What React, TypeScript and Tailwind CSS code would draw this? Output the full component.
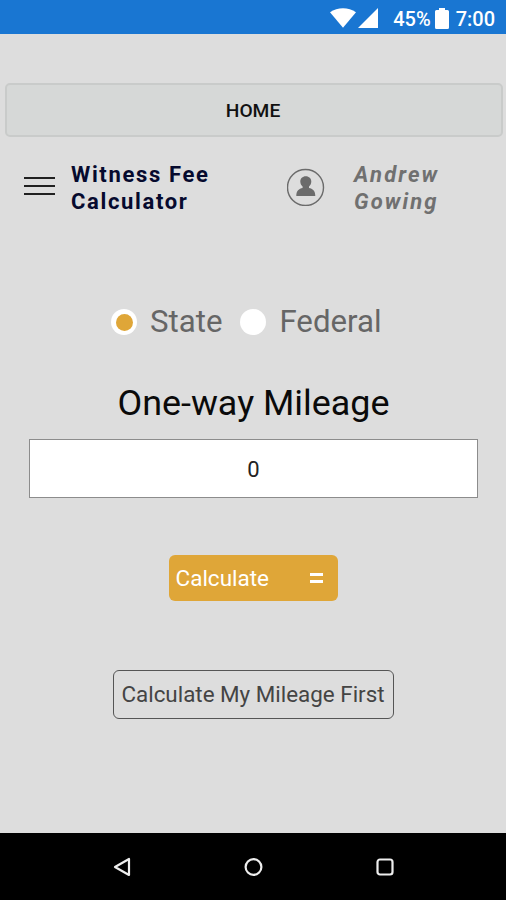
import React, { useState } from 'react';

type Court = 'State' | 'Federal';

const StatusBar: React.FC = () => (
    <div className="h-[34px] shrink-0 bg-[#1976d2] flex items-center justify-end pr-[11px] pt-[2px] text-white">
        <svg width="26" height="20" viewBox="0 0 26 20" fill="currentColor">
            <path d="M0 4.2C7.500-1.100 18.500-1.100 26 4.200L13 19.800Z" />
        </svg>
        <svg className="ml-[2px]" width="20" height="20" viewBox="0 0 20 20" fill="currentColor">
            <path d="M20 0V20H0Z" />
        </svg>
        <span className="ml-[15px] pt-[2px] text-[20px] leading-none font-medium">45%</span>
        <svg className="ml-[4px]" width="14" height="21" viewBox="0 0 14 21" fill="currentColor">
            <path d="M4 0H10V2H12.500Q14 2 14 3.500V19.500Q14 21 12.500 21H1.500Q0 21 0 19.500V3.500Q0 2 1.500 2H4Z" />
        </svg>
        <span className="ml-[7px] pt-[2px] text-[20px] leading-none font-medium">7:00</span>
    </div>
);

const Header: React.FC = () => (
    <header className="mt-[24px] flex h-[54px]">
        <button className="ml-[24px] mt-[16px] flex h-[18px] w-[31px] flex-col justify-between" aria-label="Menu">
            <span className="h-[2px] w-full bg-[#202020]" />
            <span className="h-[2px] w-full bg-[#202020]" />
            <span className="h-[2px] w-full bg-[#202020]" />
        </button>
        <h1 className="ml-[16px] w-[216px] text-[22px] leading-[27px] font-bold tracking-[1.65px] text-[#060a2e]">
            Witness Fee
            <br />
            Calculator
        </h1>
        <svg className="mt-[7px] shrink-0" width="38" height="38" viewBox="0 0 38 38">
            <circle cx="18.500" cy="19.500" r="18" fill="none" stroke="#6b6b6b" strokeWidth="1.400" />
            <path
                d="M18.800 8.200C22.100 8.200 24.300 10.600 24.300 13.500C24.300 15.800 23.300 17.400 22 18.400V20C25.600 20.800 28.300 22.800 28.300 27.900H9.300C9.300 22.800 12 20.800 15.600 20V18.400C14.300 17.400 13.300 15.800 13.300 13.500C13.300 10.600 15.500 8.200 18.800 8.200Z"
                fill="#6b6b6b"
            />
        </svg>
        <span className="ml-[29px] text-[22px] leading-[27px] font-bold italic tracking-[2.1px] text-[#707070]">
            Andrew
            <br />
            Gowing
        </span>
    </header>
);

interface RadioProps {
    label: Court;
    checked: boolean;
    onSelect: (court: Court) => void;
}

const Radio: React.FC<RadioProps> = ({ label, checked, onSelect }) => (
    <button role="radio" aria-checked={checked} onClick={() => onSelect(label)} className="flex items-center">
        <span className="flex size-[26px] items-center justify-center rounded-full bg-white">
            {checked && <span className="size-[17px] rounded-full bg-[#dfa638]" />}
        </span>
        <span className="ml-[13px] text-[31.200px] leading-[36px] text-[#666666]">{label}</span>
    </button>
);

const NavBar: React.FC = () => (
    <nav className="h-[67px] shrink-0 bg-black flex items-center justify-center gap-[111px] text-[#eeeeee]">
        <svg width="20" height="20" viewBox="0 0 20 20" fill="none" stroke="currentColor" strokeWidth="2.200" strokeLinejoin="round">
            <path d="M3 10L17 2V18Z" />
        </svg>
        <svg width="20" height="20" viewBox="0 0 20 20" fill="none" stroke="currentColor" strokeWidth="2.200">
            <circle cx="10.500" cy="10" r="7.900" />
        </svg>
        <svg width="20" height="20" viewBox="0 0 20 20" fill="none" stroke="currentColor" strokeWidth="2.200">
            <rect x="3.500" y="2.500" width="15" height="15" rx="2.500" />
        </svg>
    </nav>
);

export default function App() {
    const [court, setCourt] = useState<Court>('State');
    const [mileage, setMileage] = useState('0');

    return (
        <div className="flex h-[900px] w-[506px] flex-col overflow-hidden bg-[#dddddd] font-['Roboto',sans-serif]">
            <StatusBar />

            <main className="flex flex-1 flex-col">
                <button className="ml-[5px] mr-[3px] mt-[49px] h-[54px] rounded-[5px] border-2 border-[#c9cbca] bg-[#d6d8d7] pt-[2px] pr-[2px] text-[19.200px] font-medium text-[#111111]">
                    HOME
                </button>

                <Header />

                <div role="radiogroup" className="mt-[89px] ml-[111px] flex gap-[18px]">
                    <Radio label="State" checked={court === 'State'} onSelect={setCourt} />
                    <Radio label="Federal" checked={court === 'Federal'} onSelect={setCourt} />
                </div>

                <label htmlFor="mileage" className="mt-[41px] pl-px text-center text-[35.900px] leading-[44px] text-[#0a0a0a]">
                    One-way Mileage
                </label>
                <input
                    id="mileage"
                    value={mileage}
                    onChange={(e) => setMileage(e.target.value)}
                    className="ml-[29px] mr-[28px] mt-[14px] h-[59px] border border-[#8c8c8c] bg-white pt-[2px] text-center text-[22px] text-[#222222] outline-none"
                />

                <button className="mt-[57px] flex h-[46px] w-[169px] items-center justify-between self-center rounded-[6px] bg-[#dfa638] pl-[7px] pr-[15px] text-[22.500px] text-white">
                    <span className="pt-px">Calculate</span>
                    <span className="flex w-[13px] flex-col gap-[4px]">
                        <span className="h-[3px] bg-white" />
                        <span className="h-[3px] bg-white" />
                    </span>
                </button>

                <button className="mt-[69px] h-[49px] w-[281px] self-center rounded-[6px] border border-[#555555] text-[22.400px] whitespace-nowrap text-[#444444]">
                    Calculate My Mileage First
                </button>
            </main>

            <NavBar />
        </div>
    );
}
